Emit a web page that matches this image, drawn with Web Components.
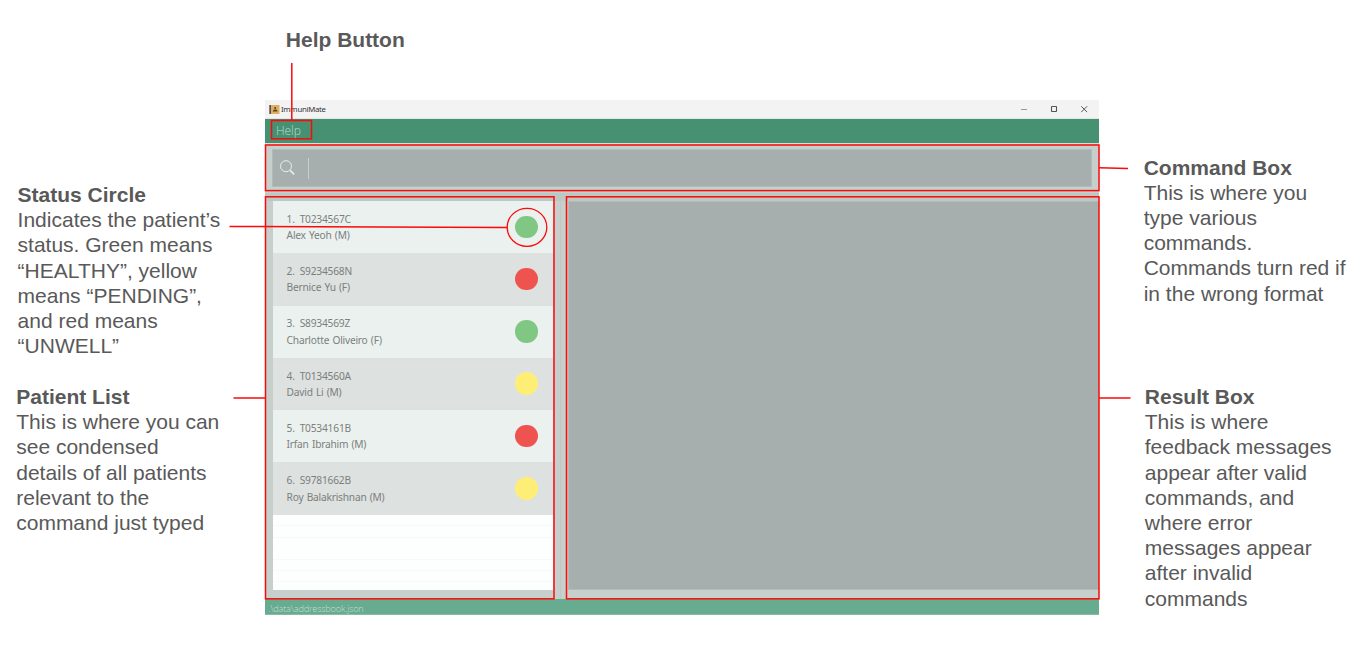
<!DOCTYPE html>
<html lang="en">
<head>
<meta charset="utf-8">
<title>ImmuniMate guide</title>
<style>
html,body{margin:0;background:#fff}
body{width:1370px;height:653px;overflow:hidden}
</style>
</head>
<body>
<guide-page></guide-page>
<script>
function define(name, html){
  const t=document.createElement('template');
  t.innerHTML=html;
  customElements.define(name, class extends HTMLElement{
    constructor(){
      super();
      this.attachShadow({mode:'open'}).appendChild(t.content.cloneNode(true));
    }
  });
}

define('guide-note', `
<style>
:host{display:block;font:21px/25.2px "Liberation Sans",Arial,sans-serif;color:#595959;white-space:nowrap}
h2{margin:0;font:inherit;font-weight:bold}
p{margin:0}
</style>
<h2><slot name="title"></slot></h2><p><slot></slot></p>`);

define('title-bar', `
<style>
:host{display:flex;align-items:center;height:19px;padding:0 10px 0 4px;background:#f3f3f3;border-bottom:1px solid #dfe6e3;box-sizing:border-box;color:#333;font:7.8px/12px "Noto Sans",sans-serif}
.name{margin-left:1px;flex:1;letter-spacing:-.28px}
.controls{display:flex;gap:20px}
svg{display:block}
</style>
<svg width="11" height="11" viewBox="0 0 11 11"><rect x="1" y="1" width="9.5" height="9" fill="#dfae62"/><rect x="0.3" y="1" width="1.7" height="9" fill="#5d5247"/><circle cx="6.2" cy="4" r="1" fill="#5a4325"/><path d="M3.8 7.4c.4-2.6 4.4-2.6 4.8 0z" fill="#5a4325"/></svg>
<span class="name">ImmuniMate</span>
<div class="controls">
<svg width="10" height="10" viewBox="0 0 10 10"><path d="M2 5.5h6" stroke="#999" fill="none"/></svg>
<svg width="10" height="10" viewBox="0 0 10 10"><rect x="2.5" y="2.5" width="5" height="5" rx=".4" stroke="#555" stroke-width="1.1" fill="none"/></svg>
<svg width="10" height="10" viewBox="0 0 10 10"><path d="M2.3 2.3l5.8 5.8M8.1 2.3L2.3 8.1" stroke="#555" fill="none"/></svg>
</div>`);

define('menu-bar', `
<style>
:host{display:flex;align-items:center;height:24px;box-sizing:border-box;padding-left:11px;background:#459172;color:#bfdacf;font:300 12px/16px "Open Sans","Noto Sans",sans-serif}
span{letter-spacing:-.1px}
</style>
<span><slot></slot></span>`);

define('command-box', `
<style>
:host{display:block;box-sizing:border-box;height:49px;padding:5px 7px 6px 7px;background:#c6cfcb}
.field{display:flex;align-items:center;height:38px;box-sizing:border-box;border:1px solid #b2bbb8;background:#a6afad;padding-left:7px}
svg{display:block}
i{display:block;width:1.4px;height:21px;margin-left:12px;background:#c9cfcd}
</style>
<div class="field"><svg width="16" height="16" viewBox="0 0 16 16" fill="none" stroke="#e9eceb"><circle cx="6" cy="6.2" r="5.5" stroke-width="1"/><path d="M10.2 10.3l4 4.2" stroke-width="1.7"/></svg><i></i></div>`);

define('patient-card', `
<style>
:host{display:flex;align-items:center;box-sizing:border-box;height:52.3px;padding:0 15.2px 0 13.6px;background:#ebf1ef;color:#7b7f7d;font:10.2px/16.5px "Noto Sans",sans-serif;white-space:pre}
:host(:nth-of-type(even)){background:#dde1e0}
.text{flex:1;margin-top:.1px}
.id{letter-spacing:-.2px}
.name{letter-spacing:-.22px;word-spacing:.8px}
.dot{width:22.6px;height:22.6px;border-radius:50%;background:#80c783;margin-top:-.6px}
:host([status="unwell"]) .dot{background:#ef5350}
:host([status="pending"]) .dot{background:#ffee76}
</style>
<div class="text"><div class="id"><slot name="id"></slot></div><div class="name"><slot></slot></div></div><div class="dot"></div>`);

define('patient-list', `
<style>
:host{display:block;box-sizing:border-box;width:280px;height:389px;background:linear-gradient(#f7f9f8,#f7f9f8) 0 324px/100% 1px no-repeat,linear-gradient(#f7f9f8,#f7f9f8) 0 336px/100% 1px no-repeat,linear-gradient(#f7f9f8,#f7f9f8) 0 358px/100% 1px no-repeat,linear-gradient(#f7f9f8,#f7f9f8) 0 369px/100% 1px no-repeat,linear-gradient(#f7f9f8,#f7f9f8) 0 380px/100% 1px no-repeat,#fdfefe}
</style>
<slot></slot>`);

define('result-box', `
<style>
:host{display:block;flex:1;height:389px;box-sizing:border-box;background:#a6afad;border:solid #b2bbb8;border-width:1px 0 1px 1px}
</style>`);

define('status-bar', `
<style>
:host{display:block;box-sizing:border-box;height:16px;padding-left:3.4px;background:#67ab90;border-bottom:1px solid #86bca6;color:#c5ded4;font:300 9.2px/19px "Open Sans","Noto Sans",sans-serif;letter-spacing:-.2px;overflow:hidden}
</style>
<slot></slot>`);

define('app-window', `
<style>
:host{display:block;width:834px;height:515px}
.rule{height:1px;background:#d5e0dc}
.gap{height:8px;background:#bdc7c3}
.panes{display:flex;height:398px;box-sizing:border-box;padding:0 0 0 8px;background:#c6cfcb}
.divider{width:13px;height:398px;box-sizing:border-box;background:linear-gradient(90deg,#c6cfcb 0 7px,#bfc8c4 7px 8px,#c6cfcb 8px)}
.right{flex:1;display:flex;padding-left:2px}
</style>
<title-bar></title-bar><menu-bar>Help</menu-bar><div class="rule"></div>
<command-box></command-box><div class="gap"></div>
<div class="panes">
<patient-list>
<patient-card status="healthy"><span slot="id">1.  T0234567C</span>Alex Yeoh (M)</patient-card>
<patient-card status="unwell"><span slot="id">2.  S9234568N</span>Bernice Yu (F)</patient-card>
<patient-card status="healthy"><span slot="id">3.  S8934569Z</span>Charlotte Oliveiro (F)</patient-card>
<patient-card status="pending"><span slot="id">4.  T0134560A</span>David Li (M)</patient-card>
<patient-card status="unwell"><span slot="id">5.  T0534161B</span>Irfan Ibrahim (M)</patient-card>
<patient-card status="pending"><span slot="id">6.  S9781662B</span>Roy Balakrishnan (M)</patient-card>
</patient-list>
<div class="divider"></div>
<div class="right"><result-box></result-box></div>
</div>
<status-bar>.\\data\\addressbook.json</status-bar>`);

define('callout-lines', `
<style>
:host{display:block;position:absolute;left:0;top:0;pointer-events:none}
svg{display:block}
</style>
<svg width="1370" height="653" viewBox="0 0 1370 653" fill="none" stroke="#fb0a0a" stroke-width="1.5">
<path d="M291.8 63V120.5"/><rect x="271.5" y="120.5" width="40" height="18.3"/>
<rect x="265.5" y="145" width="833.5" height="45.6"/>
<rect x="265.5" y="196.8" width="288.5" height="402"/>
<rect x="566.5" y="196.8" width="532.5" height="402"/>
<ellipse cx="527" cy="227.3" rx="19.8" ry="19" stroke-width="1.3"/>
<path d="M229.5 226.5L507 227.5M233.5 398H265.5M1099 167.8L1128 168.4M1099 398H1130.5"/>
</svg>`);

define('guide-page', `
<style>
:host{display:grid;position:relative;width:1370px;height:653px;box-sizing:border-box;grid-template-columns:265px 834px 1fr;overflow:hidden;background:#fff}
.left{padding:182px 0 0 17.6px}
.left guide-note+guide-note{margin:25.6px 0 0 -1.4px}
.mid guide-note{padding:27px 0 0 20.8px;height:100px;box-sizing:border-box}
.right{padding:154.6px 0 0 44.7px}
.right guide-note+guide-note{margin:78.2px 0 0 1.1px}
</style>
<div class="left">
<guide-note><span slot="title">Status Circle</span>Indicates the patient’s<br>status. Green means<br>“HEALTHY”, yellow<br>means “PENDING”,<br>and red means<br>“UNWELL”</guide-note>
<guide-note><span slot="title">Patient List</span>This is where you can<br>see condensed<br>details of all patients<br>relevant to the<br>command just typed</guide-note>
</div>
<div class="mid"><guide-note><span slot="title">Help Button</span></guide-note><app-window></app-window></div>
<div class="right">
<guide-note><span slot="title">Command Box</span>This is where you<br>type various<br>commands.<br>Commands turn red if<br>in the wrong format</guide-note>
<guide-note><span slot="title">Result Box</span>This is where<br>feedback messages<br>appear after valid<br>commands, and<br>where error<br>messages appear<br>after invalid<br>commands</guide-note>
</div>
<callout-lines></callout-lines>`);
</script>
</body>
</html>
